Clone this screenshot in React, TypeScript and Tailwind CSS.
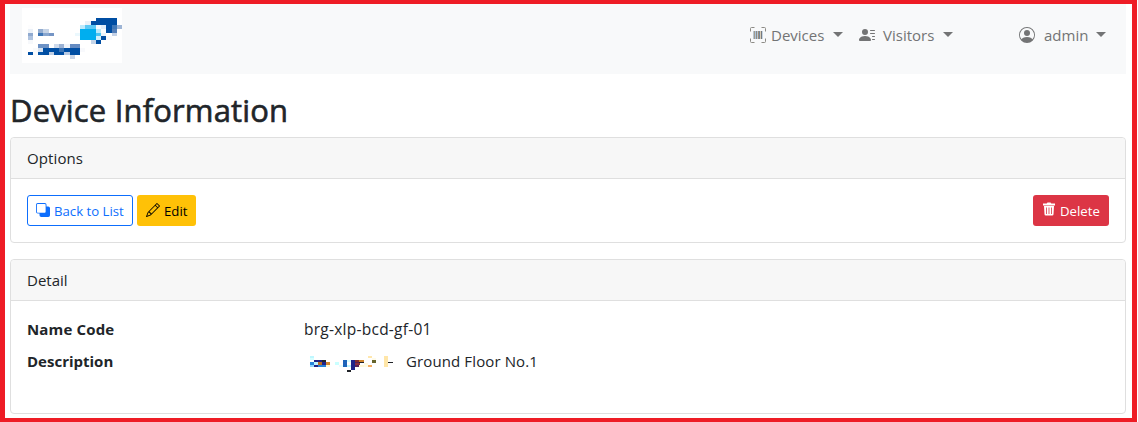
import { BsPersonLinesFill, BsPersonCircle, BsBack, BsPencil } from 'react-icons/bs';

type Cell = [number, number, number, number, string];

const logoCells: Cell[] = [
  [288, 54, 63, 9, '#004ea3'], [255, 63, 18, 12, '#eaf0f7'], [273, 63, 78, 12, '#004ea3'],
  [84, 75, 15, 11, '#fdfdfe'], [240, 75, 15, 12, '#bdeafc'], [255, 75, 33, 12, '#5cc9f5'], [288, 75, 15, 12, '#f5fbfe'], [303, 75, 15, 12, '#e2eefa'], [318, 75, 18, 12, '#004ea3'], [336, 75, 15, 12, '#3f78b8'], [351, 75, 15, 12, '#9eb5d5'],
  [84, 87, 15, 12, '#ebf1f8'], [114, 87, 15, 12, '#94add0'], [129, 87, 18, 12, '#c5d3e6'], [240, 87, 48, 33, '#00aeef'], [288, 87, 15, 12, '#b9eafb'], [303, 87, 15, 12, '#fafdff'], [318, 87, 18, 12, '#004ea3'], [336, 87, 15, 12, '#547fb8'],
  [84, 99, 15, 9, '#90aad0'], [114, 99, 15, 9, '#3d75b6'], [129, 99, 18, 9, '#88a6cf'], [147, 99, 15, 9, '#7595c5'], [225, 99, 15, 9, '#ebf8fd'], [288, 99, 15, 9, '#4ac3f2'], [303, 99, 15, 9, '#eaf3fb'], [336, 99, 15, 9, '#c3d1e6'],
  [84, 108, 15, 12, '#afc3df'], [288, 108, 15, 12, '#d1effa'], [303, 108, 15, 12, '#004ea3'], [318, 108, 18, 12, '#f8fafd'],
  [84, 120, 15, 12, '#f6f8fb'], [273, 120, 15, 12, '#c5d5e9'], [288, 120, 15, 12, '#004ea3'],
  [114, 132, 33, 12, '#6d92c5'], [162, 132, 15, 12, '#cedaeb'], [177, 132, 15, 12, '#9bb2d4'], [192, 132, 18, 12, '#eff3f9'], [210, 132, 30, 12, '#658bc1'],
  [99, 144, 15, 12, '#f8fafc'], [114, 144, 15, 12, '#d9e3f0'], [129, 144, 111, 12, '#004ea3'], [177, 144, 15, 12, '#3d75b6'], [240, 144, 15, 12, '#f8f9fc'],
  [84, 156, 15, 9, '#004ea3'], [99, 156, 15, 9, '#fafbfd'], [114, 156, 15, 9, '#0755a8'], [129, 156, 18, 9, '#004ea3'], [147, 156, 15, 9, '#bfcee4'], [162, 156, 30, 9, '#004ea3'], [192, 156, 18, 9, '#b9cae2'], [210, 156, 30, 9, '#004ea3'],
  [210, 165, 15, 11, '#c8d5e8'],
];

const maskCells: Cell[] = [
  [30, 33, 12, 6, '#bff7ff'], [30, 39, 12, 6, '#d8ffff'], [42, 45, 24, 6, '#202080'], [66, 45, 12, 6, '#202328'],
  [30, 51, 12, 9, '#2685db'], [42, 51, 12, 9, '#bff3ff'], [54, 51, 12, 9, '#b96b22'], [66, 51, 12, 9, '#20238a'], [78, 51, 12, 9, '#cf842c'],
  [30, 60, 12, 6, '#90d5ff'], [42, 60, 12, 6, '#202080'], [54, 60, 24, 6, '#2480d5'], [78, 60, 12, 6, '#fff7d5'],
  [105, 51, 12, 9, '#caffff'], [117, 60, 12, 6, '#e5ffff'], [129, 45, 12, 21, '#1c64b9'], [141, 45, 12, 6, '#d5ffff'], [141, 60, 12, 6, '#bff7ff'],
  [153, 45, 12, 30, '#20238a'], [165, 45, 12, 6, '#852c2c'], [177, 45, 15, 6, '#cf842c'], [165, 51, 12, 15, '#582058'], [177, 51, 15, 3, '#202328'], [165, 54, 15, 6, '#8a3040'], [177, 60, 15, 6, '#fff7d5'],
  [141, 75, 12, 6, '#202328'], [192, 54, 12, 12, '#fffbe2'],
  [204, 33, 12, 6, '#ffe7ad'], [204, 60, 12, 6, '#f3ac62'], [216, 45, 12, 9, '#66642c'], [216, 39, 12, 6, '#fffbe8'],
  [252, 33, 12, 33, '#ffe6a8'], [264, 51, 15, 3, '#202328'],
];

function Cells({ cells }: { cells: Cell[] }) {
  return (
    <>
      {cells.map(([x, y, w, h, fill], i) => (
        <rect key={i} x={x} y={y} width={w} height={h} fill={fill} />
      ))}
    </>
  );
}

function Caret() {
  return (
    <svg className="h-[5px] w-[10px] shrink-0" viewBox="0 0 10 5" fill="currentColor">
      <path d="M0 0H10L5 5Z" />
    </svg>
  );
}

function BarcodeIcon() {
  return (
    <svg className="mr-[5px] size-4 shrink-0" viewBox="0 0 16 16" fill="none">
      <path d="M.5 4.500V1.500a1 1 0 0 1 1-1h3M11.500.5h3a1 1 0 0 1 1 1v3M15.500 11.500v3a1 1 0 0 1-1 1h-3M4.500 15.500h-3a1 1 0 0 1-1-1v-3" stroke="#8d8b86" />
      <path d="M3 4h1v8H3z" fill="#b9c6d0" />
      <path d="M4 4h1v8H4z" fill="#a39a8c" />
      <path d="M5 4h1v8H5z" fill="#a9c4dc" />
      <path d="M6 4h1v8H6z" fill="#8f8a84" />
      <path d="M7 4h1v8H7z" fill="#b4c8d8" />
      <path d="M8 4h1v8H8z" fill="#a08d78" />
      <path d="M9 4h1v8H9z" fill="#73879b" />
      <path d="M10 4h1v8h-1z" fill="#d8cdb8" />
      <path d="M11 4h1v8h-1z" fill="#75797e" />
      <path d="M12 4h1v8h-1z" fill="#c6d6e4" />
    </svg>
  );
}

function TrashIcon() {
  return (
    <svg className="mb-[3px] size-[14px] shrink-0" viewBox="0 0 14 14" fill="currentColor">
      <path d="M1 1.500h3.700l.8-1h3l.8 1H13v2H1z" />
      <path fillRule="evenodd" d="M2 4h10l-.5 8.200a1.300 1.300 0 0 1-1.300 1.300H3.800a1.300 1.300 0 0 1-1.300-1.300zM4 5.500v6.500h.8v-6.500zM6.600 5.500v6.500h.8v-6.500zM9.200 5.500v6.500h.8v-6.500z" />
    </svg>
  );
}

export default function App() {
  return (
    <div className="h-[422px] w-full bg-white pr-px">
      <div className="h-full border-x-5 border-y-4 border-[#ee1c25] bg-white pr-1.5 pl-[5px] font-['Open_Sans',sans-serif] text-[15px] leading-6 text-[#212529]">
        <nav className="flex h-[70px] items-start bg-[#f8f9fa] pl-3 text-[#737475]">
          <svg className="mt-1 h-[55px] w-[100px] bg-white" viewBox="66 24 300 165" shapeRendering="crispEdges">
            <Cells cells={logoCells} />
          </svg>
          <div className="mt-[19px] ml-[628px] flex h-6 items-center whitespace-nowrap">
            <div className="flex w-[109px] items-center">
              <BarcodeIcon />
              <span className="w-[54px]">Devices</span>
              <span className="mb-0.5 ml-[8px]"><Caret /></span>
            </div>
            <div className="flex w-[160px] items-center">
              <BsPersonLinesFill className="mr-2 size-4" />
              <span className="w-[52px]">Visitors</span>
              <span className="mb-0.5 ml-[8px]"><Caret /></span>
            </div>
            <div className="flex items-center">
              <BsPersonCircle className="mr-[9px] size-4" />
              <span className="w-[44px]">admin</span>
              <span className="mb-0.5 ml-[8px]"><Caret /></span>
            </div>
          </div>
        </nav>
        <h1 className="mt-[17px] mb-2 h-[38px] text-[31px] leading-[38px] tracking-[0.16px] [-webkit-text-stroke:0.6px_#212529]">Device Information</h1>
        <section className="h-[106px] rounded border border-[#dfdfdf]">
          <h2 className="h-[41px] rounded-t border-b border-[#dfdfdf] bg-[#f7f7f7] px-4 py-2 tracking-[0.1px]">Options</h2>
          <div className="flex p-4 text-[13.2px] leading-[21px]">
            <button className="flex h-[31px] w-[106px] items-center gap-1 whitespace-nowrap rounded-[3px] border border-[#0d6efd] px-2 text-[#0d6efd]">
              <BsBack className="mb-0.5 size-[14px] shrink-0" />
              <span className="pt-px">Back to List</span>
            </button>
            <button className="ml-1 flex h-[31px] w-[59px] items-center gap-1 rounded-[3px] bg-[#ffc107] px-[9px] text-black">
              <BsPencil className="mb-0.5 size-[14px] shrink-0" />
              <span className="pt-px">Edit</span>
            </button>
            <button className="ml-auto flex h-[31px] w-[76px] items-center gap-1 rounded-[3px] bg-[#dc3545] px-[9px] text-white">
              <TrashIcon />
              <span className="pt-px">Delete</span>
            </button>
          </div>
        </section>
        <section className="mt-4 h-[155px] rounded border border-[#dfdfdf]">
          <h2 className="h-[41px] rounded-t border-b border-[#dfdfdf] bg-[#f7f7f7] px-4 py-2">Detail</h2>
          <dl className="grid grid-cols-[277px_1fr] gap-y-2 px-4 pt-4">
            <dt className="font-bold tracking-[0.15px]">Name Code</dt>
            <dd className="text-[15.5px] tracking-[0.25px]">brg-xlp-bcd-gf-01</dd>
            <dt className="font-bold">Description</dt>
            <dd className="flex">
              <svg className="mt-[6px] ml-[5px] h-[18px] w-[86px]" viewBox="27 30 258 54" shapeRendering="crispEdges">
                <Cells cells={maskCells} />
              </svg>
              <span className="ml-[11px] tracking-[0.12px]">Ground Floor No.1</span>
            </dd>
          </dl>
        </section>
      </div>
    </div>
  );
}
